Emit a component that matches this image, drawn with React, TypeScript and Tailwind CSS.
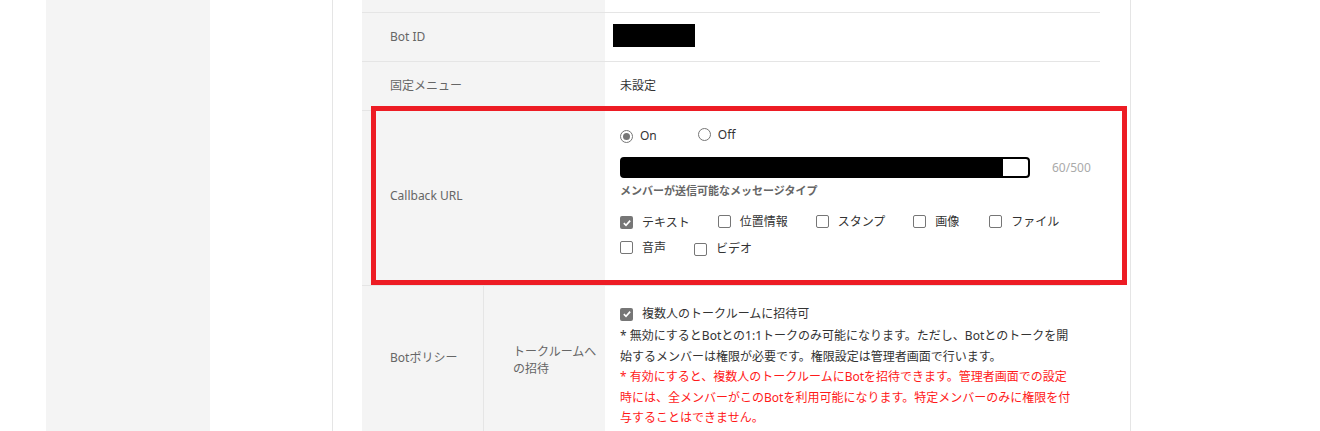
import type { ReactNode } from 'react';

const font = { fontFamily: '"Noto Sans", "Noto Sans CJK JP", sans-serif' };

function Check({ checked, label }: { checked?: boolean; label?: ReactNode }) {
  return (
    <span className="inline-flex items-center">
      <span
        className={
          checked
            ? 'flex h-[13px] w-[13px] items-center justify-center rounded-[2px] bg-[#767676]'
            : 'h-[13px] w-[13px] rounded-[2px] border border-[#767676] bg-white'
        }
      >
        {checked && (
          <svg viewBox="0 0 12 12" className="h-[10px] w-[10px]">
            <path d="M2.2 6.2 4.8 8.8 9.8 3.2" fill="none" stroke="#fff" strokeWidth="2" />
          </svg>
        )}
      </span>
      {label && <span className="ml-[9px]">{label}</span>}
    </span>
  );
}

function Radio({ checked, label }: { checked?: boolean; label: string }) {
  return (
    <span className="inline-flex items-center">
      <span className="flex h-[13px] w-[13px] items-center justify-center rounded-full border border-[#767676] bg-white">
        {checked && <span className="h-[7px] w-[7px] rounded-full bg-[#767676]" />}
      </span>
      <span className="ml-[7px]">{label}</span>
    </span>
  );
}

function Row({ label, children, className }: { label: string; children: ReactNode; className: string }) {
  return (
    <div className={`flex border-b border-[#e5e5e5] ${className}`}>
      <div className="flex w-[243px] items-center bg-[#f4f4f4] pl-[28px] text-[#666]">{label}</div>
      <div className="flex flex-1 items-center pl-[15px] text-[#333]">{children}</div>
    </div>
  );
}

export default function App() {
  const types1 = [
    { t: '位置情報', mr: 'mr-[28px]' },
    { t: 'スタンプ', mr: 'mr-[28px]' },
    { t: '画像', mr: 'mr-[30px]' },
    { t: 'ファイル', mr: 'mr-[28px]' },
  ];

  return (
    <div className="flex h-[431px] w-[1320px] overflow-hidden bg-white text-[12px]" style={font}>
      <div className="w-[46px]" />
      <div className="w-[164px] bg-[#f4f4f4]" />
      <div className="w-[122px]" />
      <div className="w-[799px] border-x border-[#e5e5e5] pl-[29px] pr-[30px]">
        <div className="flex h-[13px] border-b border-[#e5e5e5]">
          <div className="w-[243px] bg-[#f4f4f4]" />
        </div>

        <Row label="Bot ID" className="h-[49px]">
          <div className="-ml-[7px] -mt-[4px] h-[23px] w-[82px] bg-black" />
        </Row>

        <Row label="固定メニュー" className="h-[49px]">
          <span>未設定</span>
        </Row>

        <div className="relative flex h-[175px] border-b border-[#e5e5e5]">
          <div className="flex w-[243px] items-center bg-[#f4f4f4] pb-[4px] pl-[28px] text-[#666]">Callback URL</div>
          <div className="flex-1 pl-[15px] pt-[16px] text-[#333]">
            <div className="flex h-[18px] items-center">
              <Radio checked label="On" />
              <span className="ml-[41px]">
                <Radio label="Off" />
              </span>
            </div>
            <div className="mt-[12px] flex items-center">
              <div className="h-[21px] w-[410px] rounded-[4px] border-2 border-black p-0">
                <div className="h-full w-[381px] bg-black" />
              </div>
              <span className="ml-[22px] text-[#aaa]">60/500</span>
            </div>
            <div className="mt-[5px] h-[16px] text-[11px] font-bold leading-[16px] text-[#666]">
              メンバーが送信可能なメッセージタイプ
            </div>
            <div className="mt-[14px] flex h-[20px] items-center">
              <span className="mr-[28px]">
                <Check checked label="テキスト" />
              </span>
              {types1.map(({ t, mr }) => (
                <span key={t} className={mr}>
                  <Check label={t} />
                </span>
              ))}
            </div>
            <div className="mt-[6px] flex h-[20px] items-center">
              <span className="mr-[28px]">
                <Check label="音声" />
              </span>
              <Check label="ビデオ" />
            </div>
          </div>
          <div className="pointer-events-none absolute -top-[5px] bottom-0 left-[9px] -right-[27px] border-[5px] border-[#ed1c24]" />
        </div>

        <div className="flex h-[160px]">
          <div className="w-[122px] border-r border-[#e5e5e5] bg-[#f4f4f4] pl-[28px] pt-[62px] leading-[20px] text-[#666]">
            Botポリシー
          </div>
          <div className="w-[121px] bg-[#f4f4f4] pl-[29px] pt-[57px] leading-[17px] text-[#666]">
            トークルームへ
            <br />
            の招待
          </div>
          <div className="flex-1 pl-[15px] pt-[18px] text-[#333]">
            <div className="flex h-[20px] items-center">
              <Check checked label="複数人のトークルームに招待可" />
            </div>
            <div className="mt-[2px] whitespace-nowrap leading-[20.5px]">
              * 無効にするとBotとの1:1トークのみ可能になります。ただし、Botとのトークを開
              <br />
              始するメンバーは権限が必要です。権限設定は管理者画面で行います。
            </div>
            <div className="whitespace-nowrap leading-[20.5px] text-[#ff1a1a]">
              * 有効にすると、複数人のトークルームにBotを招待できます。管理者画面での設定
              <br />
              時には、全メンバーがこのBotを利用可能になります。特定メンバーのみに権限を付
              <br />
              与することはできません。
            </div>
          </div>
        </div>
      </div>
    </div>
  );
}
